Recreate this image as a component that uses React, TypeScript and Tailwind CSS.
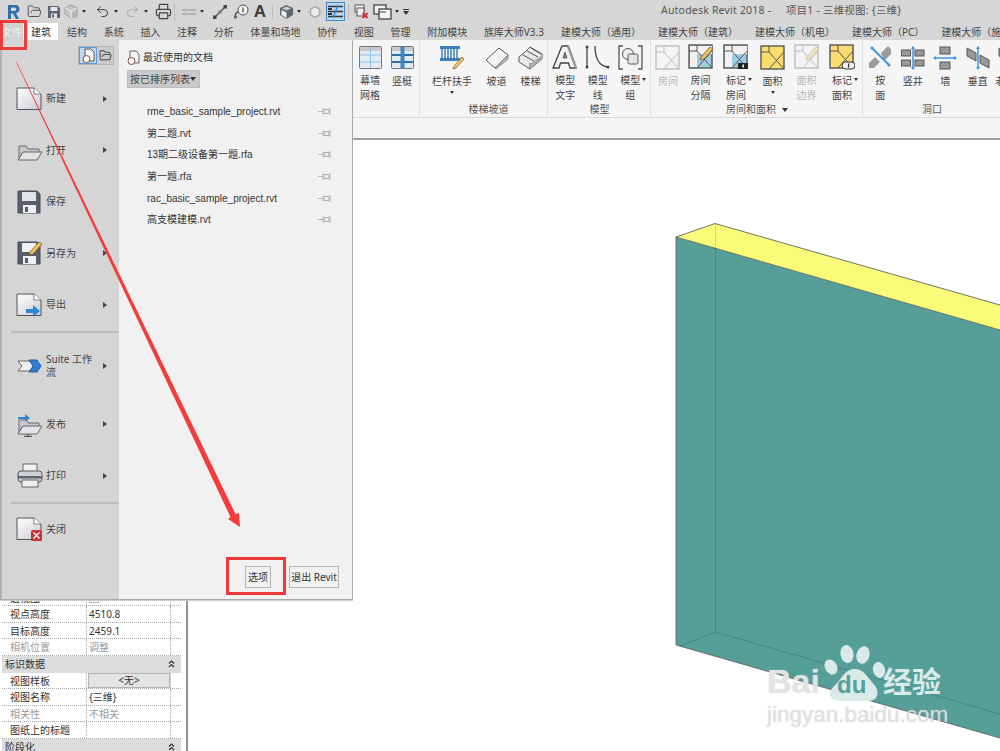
// App.tsx
import type { ReactNode } from "react";
import { FolderOpen, Undo2, Redo2, Printer } from "lucide-react";

const cjk = "font-['Noto_Sans','Noto_Sans_CJK_SC',sans-serif]";

type Rect = { x: number; y: number; w: number; h: number };

function Svg({ w, h, children, className = "" }: { w: number; h: number; children: ReactNode; className?: string }) {
  return (
    <svg width={w} height={h} viewBox={`0 0 ${w} ${h}`} className={`shrink-0 ${className}`}>
      {children}
    </svg>
  );
}

/* ---- quick access icons ---- */
function RevitLogo() {
  return (
    <Svg w={13} h={16}>
      <path d="M1 1h7a4 4 0 0 1 1 8l3 6H9L6 9.500H4V15H1z M4 3.500V7h3.500a1.700 1.700 0 0 0 0-3.500z" fill="#2f6ea8" fillRule="evenodd" />
    </Svg>
  );
}

function Caret({ className = "" }: { className?: string }) {
  return <span className={`inline-block w-0 h-0 border-x-[2.5px] border-x-transparent border-t-[3px] border-t-[#333] ${className}`} />;
}

function SaveIcon() {
  return (
    <Svg w={14} h={14}>
      <path d="M1 1h10l2 2v10H1z" fill="#5d6672" />
      <rect x="3.500" y="2" width="7" height="4" fill="#e4e6ea" />
      <rect x="4" y="8.500" width="6" height="4.500" fill="#e4e6ea" />
      <rect x="5" y="9.500" width="2" height="3" fill="#5d6672" />
    </Svg>
  );
}

function CubeIcon() {
  return (
    <Svg w={15} h={15}>
      <path d="M7 1l6 3v6l-6 4-6-4V4z" fill="#c6c6c6" stroke="#9c9c9c" />
      <path d="M1 4l6 3 6-3M7 7v7" fill="none" stroke="#eee" />
      <circle cx="11" cy="11" r="3" fill="#b4b4b4" />
    </Svg>
  );
}

function MeasureIcon() {
  return (
    <Svg w={15} h={12}>
      <path d="M0 4h14M0 8h14" stroke="#a8a8a8" strokeWidth="1.500" />
      <path d="M3 1v10M12 1v10" stroke="#bdbdbd" />
    </Svg>
  );
}

function AlignIcon() {
  return (
    <Svg w={16} h={16}>
      <path d="M2 14L14 2" stroke="#555" strokeWidth="1.500" />
      <rect x="1" y="11.500" width="3.500" height="3.500" fill="#444" />
      <rect x="11.500" y="1" width="3.500" height="3.500" fill="#444" />
      <rect x="6.500" y="6.500" width="3" height="3" fill="#777" />
    </Svg>
  );
}

function TagIcon() {
  return (
    <Svg w={16} h={15}>
      <path d="M2 13c0-4 2-5 5-6" fill="none" stroke="#555" strokeWidth="1.500" />
      <circle cx="2.500" cy="13" r="1.500" fill="#555" />
      <circle cx="10" cy="6" r="5" fill="#f2f2f2" stroke="#555" />
      <path d="M10 3.500v5" stroke="#222" />
    </Svg>
  );
}

function HouseIcon() {
  return (
    <Svg w={15} h={16}>
      <path d="M7.500 1l6.500 3v7l-6.500 4L1 11V4z" fill="#5e6872" />
      <path d="M2.500 6l5 2.500V14l-5-3z" fill="#f0f0f0" />
      <path d="M7.500 2.500l4.500 2-4.500 2-4.500-2z" fill="#c7ccd2" />
    </Svg>
  );
}

function HexIcon() {
  return (
    <Svg w={14} h={14}>
      <path d="M7 1.500l4.500 2.700v5.600L7 12.500 2.500 9.800V4.200z" fill="#eaeaea" stroke="#aaa" strokeWidth="1.500" />
      <path d="M0 7h2.500M11.500 7H14" stroke="#aaa" />
    </Svg>
  );
}

function ThinLinesIcon() {
  return (
    <span className="flex w-[19px] h-[19px] ml-px shrink-0 items-center justify-center border border-[#3d8ad0] bg-[#bcd9f1]">
      <Svg w={15} h={13}>
        <path d="M0 1.500h15M0 6.500h15M0 11.500h15" stroke="#333" strokeWidth="1.500" />
        <rect x="0" y="3" width="4" height="2" fill="#333" />
        <rect x="0" y="8" width="4" height="2" fill="#333" />
        <path d="M10 0L5 13" stroke="#2f8fe0" strokeWidth="1.500" />
      </Svg>
    </span>
  );
}

function CloseHiddenIcon() {
  return (
    <Svg w={14} h={15}>
      <rect x="1" y="1" width="9" height="7" fill="#f2f2f2" stroke="#555" />
      <rect x="3" y="4" width="7" height="8" fill="#f2f2f2" stroke="#555" />
      <path d="M8.500 9l5 5M13.500 9l-5 5" stroke="#d3322c" strokeWidth="2" />
    </Svg>
  );
}

function SwitchIcon() {
  return (
    <Svg w={19} h={16}>
      <rect x="1" y="1" width="12" height="9" fill="#f4f4f4" stroke="#444" strokeWidth="1.300" />
      <rect x="6" y="5" width="12" height="10" fill="#f4f4f4" stroke="#444" strokeWidth="1.300" />
      <path d="M6 8h7" stroke="#444" />
    </Svg>
  );
}

/* ---- ribbon icons ---- */
function GridPanel({ mullion = false }: { mullion?: boolean }) {
  return (
    <Svg w={23} h={23}>
      <rect x="0.500" y="0.500" width="22" height="22" rx="1" fill="#e3ebf2" stroke="#777" />
      <rect x="1" y="1" width="21" height="4" fill="#c8c8c8" />
      <path d="M1 9h21M1 16h21M11.500 1v21" stroke={mullion ? "#2d6ea6" : "#8dbff0"} strokeWidth={mullion ? 2 : 1} />
      {mullion && <rect x="9.500" y="1" width="4" height="21" fill="#3f86c5" />}
    </Svg>
  );
}

function RailingIcon() {
  return (
    <Svg w={26} h={25}>
      <rect x="1" y="1" width="20" height="3" fill="#3e80bd" />
      <path d="M3 4v10M6 4v10M9 4v10M12 4v10M15 4v10M18 4v10" stroke="#3e80bd" strokeWidth="1.500" />
      <rect x="1" y="13" width="20" height="3" fill="#3e80bd" />
      <path d="M15 21l8-9 2 2-8 9-3 1z" fill="#f1c35c" stroke="#7a5a26" strokeWidth=".7" />
    </Svg>
  );
}

function RampIcon() {
  return (
    <Svg w={24} h={22}>
      <path d="M1 13L14 1l9 7-13 13z" fill="#f4f4f4" stroke="#555" />
      <path d="M10 21l13-13v4L11 22z" fill="#bbb" stroke="#666" strokeWidth=".7" />
    </Svg>
  );
}

function StairIcon() {
  return (
    <Svg w={25} h={24}>
      <path d="M1 11l6-5 5-5 12 7v5L12 23 1 16z" fill="#e9e9e9" stroke="#555" />
      <path d="M5 9l11 6M9 5l11 6M13 2l10 6M12 23v-6" stroke="#555" />
      <path d="M12 18l12-9v4L12 23z" fill="#aaa" />
    </Svg>
  );
}

function ModelTextIcon() {
  return (
    <Svg w={26} h={25}>
      <path d="M10 1h6l8 22h-6l-1.500-5H8.500L7 23H1z" fill="#f3f3f3" stroke="#444" strokeWidth="1.300" />
      <path d="M11 13h4l-2-6z" fill="#888" stroke="#444" strokeWidth=".7" />
      <path d="M16 1l8 22" stroke="#999" strokeWidth="2.500" />
    </Svg>
  );
}

function ModelLineIcon() {
  return (
    <Svg w={25} h={24}>
      <path d="M2 1v22" stroke="#444" strokeWidth="1.300" />
      <circle cx="2" cy="2" r="1.500" fill="#444" />
      <circle cx="2" cy="22" r="1.500" fill="#444" />
      <path d="M10 1c0 12 4 20 13 21" fill="none" stroke="#444" strokeWidth="1.300" />
      <circle cx="23" cy="22" r="1.500" fill="#444" />
    </Svg>
  );
}

function ModelGroupIcon() {
  return (
    <Svg w={25} h={25}>
      <path d="M5 1H1v23h4M20 1h4v23h-4" fill="none" stroke="#555" strokeWidth="1.300" />
      <circle cx="10" cy="9" r="5.500" fill="#eee" stroke="#555" />
      <rect x="10" y="9" width="10" height="10" rx="1.500" fill="#e4e4e4" stroke="#555" />
    </Svg>
  );
}

function RoomIcon({ fill, line = "#555", faded = false, pencil = false, badge = false, pill = false, left = false }: {
  fill: string; line?: string; faded?: boolean; pencil?: boolean; badge?: boolean; pill?: boolean; left?: boolean;
}) {
  return (
    <Svg w={26} h={26}>
      <g opacity={faded ? 0.35 : 1}>
        <rect x="1" y="1" width="23" height="23" fill={fill} stroke={line} strokeWidth="1.400" />
        {left && <rect x="2" y="2" width="7" height="21" fill="#f1f1f1" />}
        {left && <rect x="9" y="2" width="15" height="8" fill="#f1f1f1" />}
        <path d="M1 7h8V1M9 7l15 17M24 7L9 24" fill="none" stroke={line} strokeWidth="1" />
        {pencil && <path d="M13 13l9-10 3 2-9 10-4 1z" fill="#f1c35c" stroke="#7a5a26" strokeWidth=".8" />}
      </g>
      {badge && <g><rect x="15" y="19" width="10" height="6" fill="#222" /><rect x="19.500" y="20.500" width="1.500" height="3" fill="#fff" /></g>}
      {pill && <g><rect x="13" y="18" width="13" height="7" rx="3.500" fill="#eee" stroke="#333" /><rect x="19" y="19.500" width="1.200" height="4" fill="#333" /></g>}
    </Svg>
  );
}

function OpeningFace() {
  return (
    <Svg w={24} h={24}>
      <path d="M13 8l7-7 3 3v5l-7 7zM1 18l6-6 5 5-6 6H1z" fill="#9c9c9c" />
      <path d="M4 3l17 17" stroke="#3a95e6" strokeWidth="1.800" />
      <circle cx="4" cy="3" r="1.600" fill="#3a95e6" />
      <circle cx="21" cy="20" r="1.600" fill="#3a95e6" />
    </Svg>
  );
}

function OpeningShaft() {
  return (
    <Svg w={24} h={24}>
      <rect x="0.500" y="4" width="9" height="6" fill="#999" stroke="#555" />
      <rect x="14" y="4" width="9" height="6" fill="#999" stroke="#555" />
      <rect x="0.500" y="14" width="9" height="6" fill="#999" stroke="#555" />
      <rect x="14" y="14" width="9" height="6" fill="#999" stroke="#555" />
      <path d="M12 1v22" stroke="#3a95e6" strokeWidth="1.500" />
      <path d="M12 0l-2 3h4zM12 24l-2-3h4z" fill="#3a95e6" />
    </Svg>
  );
}

function OpeningWall() {
  return (
    <Svg w={24} h={24}>
      <rect x="7" y="1" width="10" height="7" fill="#999" stroke="#555" />
      <rect x="7" y="16" width="10" height="7" fill="#999" stroke="#555" />
      <path d="M1 12h22" stroke="#3a95e6" strokeWidth="1.500" />
      <path d="M0 12l3-2v4zM24 12l-3-2v4z" fill="#3a95e6" />
    </Svg>
  );
}

function OpeningVertical() {
  return (
    <Svg w={24} h={24}>
      <path d="M1 2l9 5v8L1 10zM14 9l9 5v8l-9-5z" fill="#999" stroke="#555" />
      <path d="M12 1v22" stroke="#3a95e6" strokeWidth="1.500" />
      <path d="M12 0l-2 3h4zM12 24l-2-3h4z" fill="#3a95e6" />
    </Svg>
  );
}

/* ---- application menu icons ---- */
function PageShape({ children }: { children?: ReactNode }) {
  return (
    <Svg w={27} h={24}>
      <defs>
        <linearGradient id="pageFill" x1="0" y1="0" x2="1" y2="1">
          <stop offset="0" stopColor="#ffffff" />
          <stop offset="1" stopColor="#c9ccd4" />
        </linearGradient>
      </defs>
      <path d="M1 1h17l7 6v15.500H1z" fill="url(#pageFill)" stroke="#555" strokeWidth="1" />
      <path d="M18 1v6h7" fill="#fff" stroke="#666" strokeWidth=".8" />
      {children}
    </Svg>
  );
}

function FolderMenu({ arrow = false }: { arrow?: boolean }) {
  return (
    <Svg w={26} h={25}>
      {arrow && <path d="M1 5h7V2l5 4-5 4V7H1z" fill="#2f86d6" />}
      <path d="M2 8h7l2 3h11v4H5L2 21z" fill="#c6c8cc" stroke="#666" />
      <path d="M1 22l5-8h19l-5 8z" fill="#e2e3e6" stroke="#666" />
      {arrow && <path d="M11 22v3M7 24.500h8" stroke="#555" strokeWidth="1.300" />}
    </Svg>
  );
}

function FloppyMenu({ pencil = false }: { pencil?: boolean }) {
  return (
    <Svg w={26} h={26}>
      <path d="M1 2h19l3 3v19H1z" fill="#575f6b" stroke="#454b55" />
      <rect x="5" y="3" width="14" height="9" fill={pencil ? "#eef0f3" : "#e0e3e8"} />
      <rect x="6" y="16" width="13" height="8" fill="#eef0f3" />
      <rect x="8" y="18" width="3" height="5" fill="#575f6b" />
      {pencil && <path d="M13 12l9-10 3 2-9 10-4 1z" fill="#f1c35c" stroke="#7a5a26" strokeWidth=".8" />}
    </Svg>
  );
}

function ChevronMenu() {
  return (
    <Svg w={25} h={14}>
      <path d="M1 2h11l5 5-5 5H1l4-5z" fill="#f0f0f0" stroke="#666" />
      <path d="M12 1h8l4 6-4 6h-8l4-6z" fill="#2f7fd8" stroke="#2a5d9c" />
    </Svg>
  );
}

function PrinterMenu() {
  return (
    <Svg w={26} h={25}>
      <rect x="6" y="1" width="14" height="8" fill="#f2f2f2" stroke="#666" />
      <rect x="1" y="8" width="24" height="11" rx="3" fill="#cfd2d6" stroke="#555" />
      <rect x="1" y="13" width="24" height="2.500" fill="#60666f" />
      <rect x="5" y="17" width="16" height="7" fill="#eee" stroke="#666" />
    </Svg>
  );
}

function PinIcon() {
  return (
    <Svg w={13} h={9}>
      <path d="M0 4.500h5" stroke="#b9b9b9" />
      <path d="M5 1.500v6M6 2.500h5v4H6zM12 1v7" fill="#eee" stroke="#b0b0b0" />
    </Svg>
  );
}

function DoubleChevron() {
  return (
    <Svg w={7} h={8} className="mt-[4px]">
      <path d="M1 3.500l2.500-2.500L6 3.500M1 7l2.500-2.500L6 7" fill="none" stroke="#333" strokeWidth="1.200" />
    </Svg>
  );
}

/* ---- ribbon parts ---- */
function Tool({ w, icon, lines, faded, caret, under }: {
  w: string; icon: ReactNode; lines: string[]; faded?: boolean; caret?: boolean; under?: boolean;
}) {
  return (
    <div className={`${w} shrink-0 flex flex-col items-center`}>
      <div className="h-[29px] flex items-center justify-center">{icon}</div>
      <div className={`mt-[2px] relative text-[10px] leading-[14.500px] text-center whitespace-nowrap ${faded ? "text-[#b5b5b5]" : "text-[#444]"}`}>
        {lines.map((l) => (
          <div key={l}>{l}</div>
        ))}
        {caret && <Caret className="absolute -right-[6px] top-[5px]" />}
        {under && <div className="h-[8px] flex justify-center items-center"><Caret /></div>}
      </div>
    </div>
  );
}

function Group({ label, caret, className, children }: { label: string; caret?: boolean; className: string; children: ReactNode }) {
  return (
    <div className={`h-full shrink-0 flex flex-col border-r border-[#e1e1e1] ${className}`}>
      <div className="h-[62px] shrink-0 flex pt-[3px]">{children}</div>
      <div className="h-[15px] flex items-center justify-center gap-[6px] text-[10px] text-[#555]">
        {label}
        {caret && <Caret className="border-x-[3.500px] border-t-[4px]" />}
      </div>
    </div>
  );
}

/* ---- properties rows ---- */
function PropRow({ name, value, muted, button, check }: { name: string; value?: string; muted?: boolean; button?: boolean; check?: boolean }) {
  return (
    <div className="h-[16.600px] flex shrink-0 bg-white border-b border-dotted border-[#a8a8a8] text-[10px] leading-[16px]">
      <div className={`w-[85px] pl-[8px] border-r border-dotted border-[#a8a8a8] ${muted ? "text-[#999]" : "text-[#333]"}`}>{name}</div>
      <div className={`w-[84px] pl-[2px] border-r border-dotted border-[#a8a8a8] ${muted ? "text-[#999]" : "text-[#333]"}`}>
        {check && <div className="w-[10px] h-[10px] mt-[3px] border border-[#bbb]" />}
        {button ? (
          <div className="h-[15px] ml-[-1px] bg-[#e4e4e4] border border-[#b4b4b4] text-center leading-[13px]">{value}</div>
        ) : value}
      </div>
    </div>
  );
}

function PropHeader({ title, h }: { title: string; h: string }) {
  return (
    <div className={`${h} shrink-0 bg-[#dcdcdc] flex items-start justify-between pl-[3px] pr-[6px] text-[10px] leading-[16px] text-[#333]`}>
      <span>{title}</span>
      <DoubleChevron />
    </div>
  );
}

/* ---- application menu ---- */
function MenuItem({ icon, label, arrow = true, h = "h-[51.500px]" }: { icon: ReactNode; label: ReactNode; arrow?: boolean; h?: string }) {
  return (
    <div className={`${h} shrink-0 flex items-center pl-[13px] pr-[12px]`}>
      <div className="w-[29px] flex justify-center">{icon}</div>
      <div className="flex-1 text-[10px] leading-[13px] text-[#444] pl-[2px]">{label}</div>
      {arrow && <span className="w-0 h-0 border-y-[3.500px] border-y-transparent border-l-[4px] border-l-[#444]" />}
    </div>
  );
}

const files = [
  "rme_basic_sample_project.rvt",
  "第二题.rvt",
  "13期二级设备第一题.rfa",
  "第一题.rfa",
  "rac_basic_sample_project.rvt",
  "高支模建模.rvt",
];

const rightTabs = ["建模大师（通用）", "建模大师（建筑）", "建模大师（机电）", "建模大师（PC）", "建模大师（施工）"];
const leftTabs = ["结构", "系统", "插入", "注释", "分析", "体量和场地", "协作", "视图", "管理", "附加模块", "族库大师V3.3"];

const redBoxes: Rect[] = [
  { x: 0, y: 20, w: 27, h: 30 },
  { x: 226, y: 557, w: 60, h: 38 },
];

export default function App() {
  return (
    <div className={`relative w-[1000px] h-[751px] overflow-hidden bg-white flex flex-col ${cjk}`}>
      {/* title bar with quick access */}
      <div className="h-[23px] shrink-0 bg-[#d6d6d6] flex items-center relative">
        <div className="flex items-center text-[#555]">
          <div className="w-[24px] shrink-0 flex justify-center pl-[2px]"><RevitLogo /></div>
          <div className="w-[21px] shrink-0 flex justify-center"><FolderOpen size={15} strokeWidth={1.6} /></div>
          <div className="w-[18px] shrink-0 flex justify-center"><SaveIcon /></div>
          <div className="w-[29px] shrink-0 flex items-center gap-[3px] pl-[1px]"><CubeIcon /><Caret /></div>
          <div className="w-[30px] shrink-0 flex items-center gap-[4px] pl-[3px]"><Undo2 size={15} strokeWidth={1.6} className="text-[#444]" /><Caret /></div>
          <div className="w-[30px] shrink-0 flex items-center gap-[4px] pl-[3px]"><Redo2 size={15} strokeWidth={1.6} className="text-[#aaa]" /><Caret /></div>
          <div className="w-[22px] shrink-0 flex justify-center"><Printer size={17} strokeWidth={1.7} className="text-[#444]" /></div>
          <div className="w-px h-[16px] shrink-0 bg-[#bbb] mr-[6px]" />
          <div className="w-[28px] shrink-0 flex items-center gap-[3px] pl-px"><MeasureIcon /><Caret /></div>
          <div className="w-[22px] shrink-0 flex justify-center"><AlignIcon /></div>
          <div className="w-[20px] shrink-0 flex justify-center"><TagIcon /></div>
          <div className="w-[18px] shrink-0 text-center text-[17px] font-bold leading-[20px] text-[#3a3a3a] font-['Liberation_Sans',sans-serif]">A</div>
          <div className="w-px h-[16px] shrink-0 bg-[#bbb] ml-[3px] mr-[6px]" />
          <div className="w-[26px] shrink-0 flex items-center gap-[3px]"><HouseIcon /><Caret /></div>
          <div className="w-[20px] shrink-0 flex justify-center"><HexIcon /></div>
          <ThinLinesIcon />
          <div className="w-px h-[16px] shrink-0 bg-[#bbb] mx-[3px]" />
          <div className="w-[18px] shrink-0 flex justify-center"><CloseHiddenIcon /></div>
          <div className="w-[30px] shrink-0 flex items-center gap-[3px] pl-[3px]"><SwitchIcon /><Caret /></div>
          <div className="w-[12px] shrink-0 flex flex-col items-center gap-[1px]">
            <span className="w-[6px] h-px bg-[#333]" />
            <Caret className="border-x-[3px] border-t-[4px]" />
          </div>
        </div>
        <div className="absolute left-[661px] top-[3px] text-[10.500px] tracking-[0.2px] leading-[15px] text-[#555] whitespace-pre">
          Autodesk Revit 2018 -{"     "}项目1 - 三维视图: {"{三维}"}
        </div>
      </div>

      {/* tabs */}
      <div className="h-[17px] shrink-0 bg-[#d6d6d6] flex items-stretch text-[10px] leading-[19px] text-[#444] whitespace-nowrap overflow-hidden">
        <div className="w-[24px] shrink-0 pl-[2px] text-[#f1f1f1] bg-[#d2d2d2] border-r border-white">文件</div>
        <div className="ml-[4px] w-[30px] shrink-0 pl-[3px] bg-white text-[#333]">建筑</div>
        <div className="ml-[9px] flex shrink-0 gap-[16.700px]">
          {leftTabs.map((t) => (
            <span key={t} className="shrink-0">{t}</span>
          ))}
        </div>
        <div className="ml-[17px] flex shrink-0 gap-[17px]">
          {rightTabs.map((t) => (
            <span key={t} className="shrink-0">{t}</span>
          ))}
        </div>
      </div>

      {/* ribbon */}
      <div className="h-[78px] shrink-0 bg-[#f5f5f5] border-b border-[#d9d9d9] flex pl-[354px] text-[#444] overflow-hidden">
        <Group label="" className="w-[66px]">
          <Tool w="w-[32px]" icon={<GridPanel />} lines={["幕墙", "网格"]} />
          <Tool w="w-[32px]" icon={<GridPanel mullion />} lines={["竖梃"]} />
        </Group>
        <Group label="楼梯坡道" className="w-[128px] pl-[10px]">
          <Tool w="w-[44px]" icon={<RailingIcon />} lines={["栏杆扶手"]} under />
          <Tool w="w-[42px] pl-[3px]" icon={<RampIcon />} lines={["坡道"]} />
          <Tool w="w-[29px]" icon={<StairIcon />} lines={["楼梯"]} />
        </Group>
        <Group label="模型" className="w-[103px] pl-[1px]">
          <Tool w="w-[32.500px]" icon={<ModelTextIcon />} lines={["模型", "文字"]} />
          <Tool w="w-[32.500px]" icon={<ModelLineIcon />} lines={["模型", "线"]} />
          <Tool w="w-[32.500px]" icon={<ModelGroupIcon />} lines={["模型", "组"]} caret />
        </Group>
        <Group label="房间和面积" caret className="w-[212px] pl-[1px]">
          <Tool w="w-[32px]" icon={<RoomIcon fill="#f3f3f3" faded />} lines={["房间"]} faded />
          <Tool w="w-[33px]" icon={<RoomIcon fill="#9dcde4" left pencil />} lines={["房间", "分隔"]} />
          <Tool w="w-[38px]" icon={<RoomIcon fill="#9dcde4" left badge />} lines={["标记", "房间"]} caret />
          <Tool w="w-[35px]" icon={<RoomIcon fill="#fbdc6f" />} lines={["面积"]} under />
          <Tool w="w-[33px]" icon={<RoomIcon fill="#f3f3f3" faded pencil />} lines={["面积", "边界"]} faded />
          <Tool w="w-[38px]" icon={<RoomIcon fill="#fbdc6f" pill />} lines={["标记", "面积"]} caret />
        </Group>
        <Group label="洞口" className="w-[164px] border-r-0 pr-[27px] pl-[1px]">
          <Tool w="w-[32.500px]" icon={<OpeningFace />} lines={["按", "面"]} />
          <Tool w="w-[32.500px]" icon={<OpeningShaft />} lines={["竖井"]} />
          <Tool w="w-[32.500px]" icon={<OpeningWall />} lines={["墙"]} />
          <Tool w="w-[32.500px]" icon={<OpeningVertical />} lines={["垂直"]} />
          <Tool w="w-[32.500px]" icon={<OpeningVertical />} lines={["老虎窗"]} />
        </Group>
      </div>

      {/* options bar */}
      <div className="h-[22px] shrink-0 bg-[#f5f5f5] border-b-2 border-[#9e9e9e]" />

      {/* body */}
      <div className="flex-1 flex min-h-0">
        <div className="w-[188px] shrink-0 bg-white border-r-2 border-[#8f8f8f] pl-[2px] flex flex-col justify-end">
          <div className="w-[179px] flex flex-col">
            <PropRow name="透视图" check />
            <PropRow name="视点高度" value="4510.8" />
            <PropRow name="目标高度" value="2459.1" />
            <PropRow name="相机位置" value="调整" muted />
            <PropHeader title="标识数据" h="h-[16.600px]" />
            <PropRow name="视图样板" value="<无>" button />
            <PropRow name="视图名称" value="{三维}" />
            <PropRow name="相关性" value="不相关" muted />
            <PropRow name="图纸上的标题" />
            <PropHeader title="阶段化" h="h-[12px]" />
          </div>
        </div>

        {/* model view */}
        <div className="flex-1 relative bg-white">
          <svg className="absolute inset-0 w-full h-full" viewBox="0 0 812 611">
            <g transform="translate(-188,-140)">
              <polygon points="676,237 1000,330 1000,738 676,645" fill="#569f99" />
              <polygon points="676,237 715,223.500 1000,305 1000,330" fill="#fbfb7a" />
              <path d="M715.500 248V632L1000 714M715.500 632L680 646" fill="none" stroke="#43857f" strokeWidth="0.900" />
              <path d="M715.500 224V248" stroke="#d8d86a" strokeWidth="0.900" />
              <path d="M676 645V237L715 223.500L1000 305M676 237L1000 330M676 645L1000 738" fill="none" stroke="#5d6664" strokeWidth="0.900" />
            </g>
          </svg>

          {/* watermark */}
          <div className="absolute left-[579px] top-[500px] w-[190px] h-[95px]">
            <svg className="absolute left-0 top-0" width="190" height="70" viewBox="0 0 190 70">
              <g fill="#d9eae8">
                <ellipse cx="80" cy="14" rx="6.500" ry="9" transform="rotate(-10 80 14)" />
                <ellipse cx="96" cy="15" rx="6.500" ry="9" transform="rotate(15 96 15)" />
                <ellipse cx="64" cy="27" rx="6" ry="8" transform="rotate(-30 64 27)" />
                <ellipse cx="112" cy="30" rx="6" ry="8" transform="rotate(-15 112 30)" />
                <path d="M88 29c8 0 12 7 16 12s8 8 6 15c-2 5-8 5-12 5H76c-6 0-12-1-13-6-1-6 5-9 9-14s7-12 16-12z" />
              </g>
            </svg>
            <span className="absolute left-0 top-[23px] font-['Liberation_Sans',sans-serif] font-bold text-[34px] leading-[36px] text-white/60 [text-shadow:0_0_1px_#bbb]">Bai</span>
            <span className="absolute left-[70px] top-[32px] font-['Liberation_Sans',sans-serif] font-bold text-[24px] leading-[26px] text-[#569f99]">du</span>
            <span className="absolute left-[116px] top-[25px] text-[29px] leading-[34px] font-bold text-[#d9eae8]">经验</span>
            <span className="absolute left-0 top-[62px] font-['Liberation_Sans',sans-serif] text-[22.500px] leading-[26px] whitespace-nowrap text-white/50 [text-shadow:0_0_1px_#bbb]">jingyan.baidu.com</span>
          </div>
        </div>
      </div>

      {/* application menu */}
      <div className="absolute left-0 top-[40px] w-[353px] h-[560px] flex border-r border-b border-[#a9a9a9] bg-[#f1f1f1] shadow-[0_1px_0_#ccc]">
        <div className="w-[121px] shrink-0 bg-[#d5d5d5] border-l-2 border-[#b0b0b0] border-r-2 border-r-[#f1f1f1] flex flex-col">
          <div className="h-[33px] shrink-0 pt-[6px] pr-[5px] flex justify-end">
            <div className="flex h-[19px] border border-[#b5b5b5]">
              <div className="w-[18px] bg-[#bcd9f1] border border-[#5a9ad6] flex items-center justify-center">
                <Svg w={13} h={15}>
                  <path d="M3 1h6l3 3v9H3z" fill="#f5f5f5" stroke="#555" />
                  <circle cx="4.500" cy="11" r="3.500" fill="#fff" stroke="#b0402c" />
                </Svg>
              </div>
              <div className="w-[16px] bg-[#cbcbcb] flex items-center justify-center">
                <FolderOpen size={13} className="text-[#555]" />
              </div>
            </div>
          </div>
          <MenuItem icon={<PageShape />} label="新建" />
          <MenuItem icon={<FolderMenu />} label="打开" />
          <MenuItem icon={<FloppyMenu />} label="保存" arrow={false} />
          <MenuItem icon={<FloppyMenu pencil />} label="另存为" />
          <MenuItem icon={<PageShape><path d="M10 16h7v-4l7 6-7 6v-4h-7z" fill="#2f86d6" /></PageShape>} label="导出" />
          <div className="h-[2px] ml-[9px] shrink-0 bg-[#bdbdbd]" />
          <MenuItem h="h-[66px]" icon={<ChevronMenu />} label={<>Suite 工作<br />流</>} />
          <MenuItem icon={<FolderMenu arrow />} label="发布" />
          <MenuItem icon={<PrinterMenu />} label="打印" />
          <div className="h-[2px] ml-[9px] shrink-0 bg-[#bdbdbd]" />
          <MenuItem icon={<PageShape><rect x="15" y="13" width="11" height="11" rx="1.500" fill="#c8333a" /><path d="M17.500 15.500l6 6M23.500 15.500l-6 6" stroke="#fff" strokeWidth="1.300" /></PageShape>} label="关闭" arrow={false} />
        </div>

        <div className="flex-1 flex flex-col pl-[6px] pr-[13px] text-[#333] text-[10px]">
          <div className="h-[30px] shrink-0 pt-[5px] flex items-center gap-[3px]">
            <Svg w={13} h={15}>
              <path d="M3 1h6l3 3v9H3z" fill="#f5f5f5" stroke="#666" />
              <circle cx="4.500" cy="11" r="3.500" fill="#fff" stroke="#8a4a3c" />
            </Svg>
            <span>最近使用的文档</span>
          </div>
          <div className="w-[73px] h-[18px] shrink-0 bg-[#c9c9c9] border border-[#bdbdbd] flex items-center justify-between pl-[2px] pr-[4px] text-[#444] whitespace-nowrap">
            按已排序列表
            <Caret className="border-x-[3.500px] border-t-[4px]" />
          </div>
          <div className="mt-[13px] flex flex-col pl-[20px] pr-[8px]">
            {files.map((f) => (
              <div key={f} className="h-[21.600px] flex items-center justify-between text-[10px] text-[#333] font-['Liberation_Sans','Noto_Sans_CJK_SC',sans-serif]">
                <span>{f}</span>
                <PinIcon />
              </div>
            ))}
          </div>
          <div className="mt-auto mb-[11px] flex justify-end gap-[18px]">
            <div className="w-[26px] h-[22px] border border-[#b5b5b5] text-center leading-[20px] whitespace-nowrap">选项</div>
            <div className="w-[50px] h-[22px] border border-[#b5b5b5] text-center leading-[20px] whitespace-nowrap">退出 Revit</div>
          </div>
        </div>
      </div>

      {/* red annotations */}
      {redBoxes.map((b) => (
        <div
          key={b.x}
          className="absolute border-[3px] border-[#f03b3b]"
          style={{ left: b.x, top: b.y, width: b.w, height: b.h }}
        />
      ))}
      <svg className="absolute left-0 top-0 pointer-events-none" width="300" height="560" viewBox="0 0 300 560">
        <polygon points="16,62 16.600,62 235.500,514 239,513 240,527 228,519 230.500,517" fill="#f43c3c" />
      </svg>
    </div>
  );
}
